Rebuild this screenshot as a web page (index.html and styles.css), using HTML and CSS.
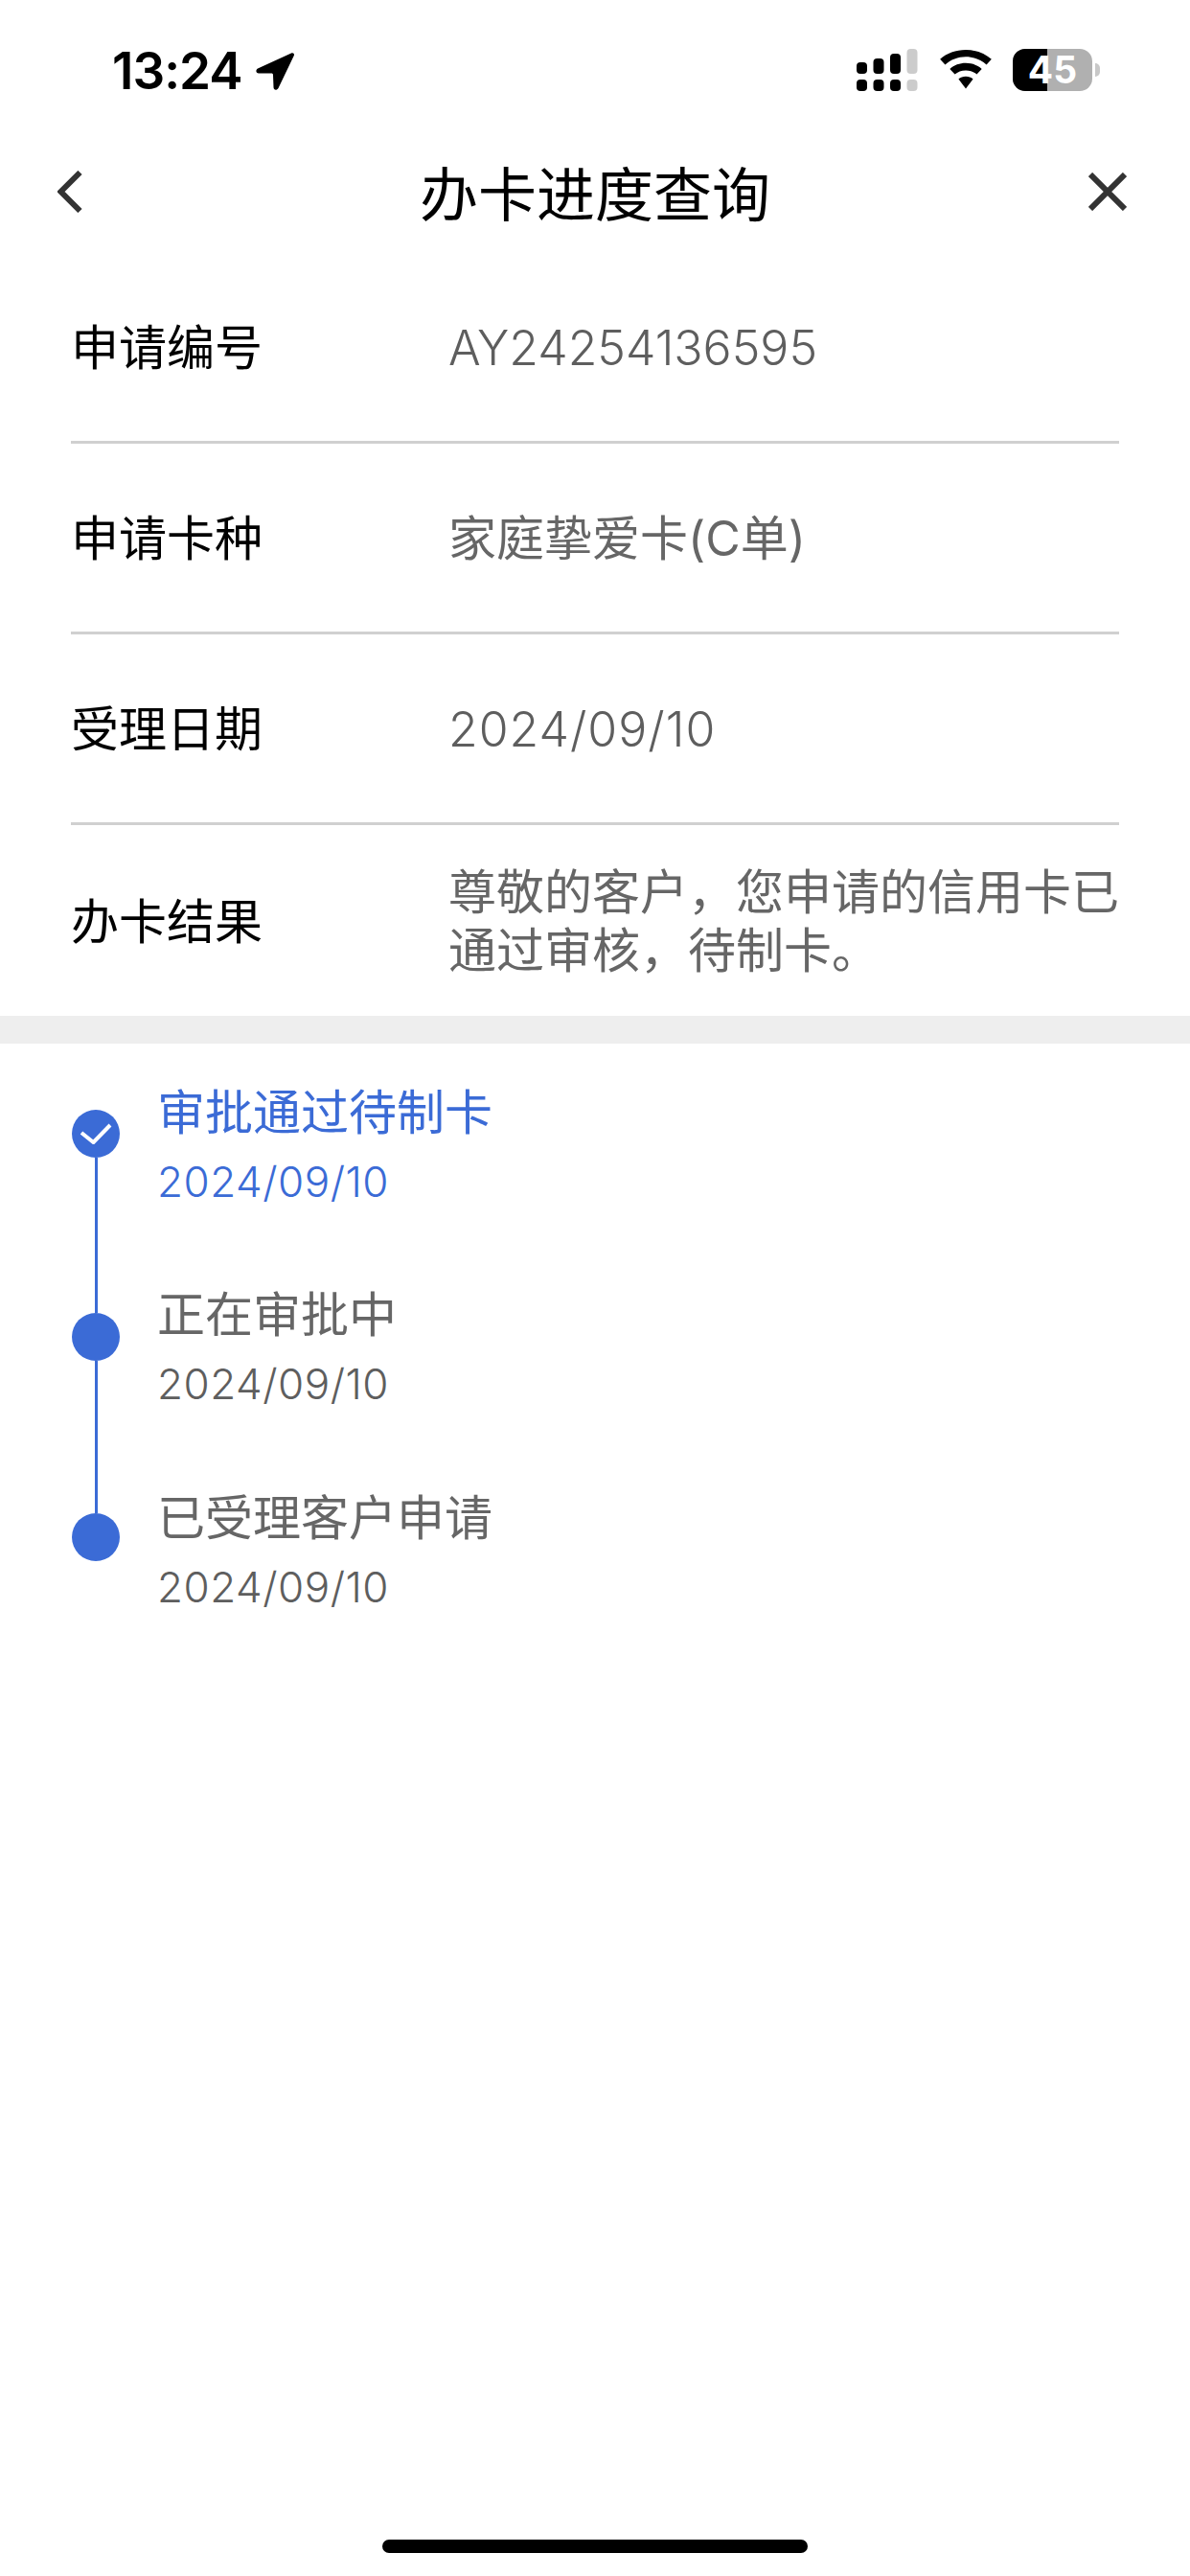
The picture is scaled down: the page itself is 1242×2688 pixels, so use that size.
FILE: index.html
```html
<!DOCTYPE html>
<html lang="zh-CN">
<head>
<meta charset="utf-8">
<title>办卡进度查询</title>
<link rel="stylesheet" href="styles.css">
</head>
<body>
<div class="page">
  <div class="status">
    <div class="status-left">
      <span class="time">13:24</span>
      <svg class="loc" viewBox="0 0 40 39"><path d="M37 .5 2 16.500C-.5 18 0 21.500 3 21.500h13c1.500 0 2 .5 2 2l.5 12.500c.1 3.500 3.500 3.500 5 1L39.800 3c.7-2-.8-3.300-2.800-2.500z"/></svg>
    </div>
    <div class="status-right">
      <svg class="cell" viewBox="0 0 64 44">
        <rect x="0" y="14" width="11" height="12" rx="4"/><rect x="17.500" y="10" width="11" height="16" rx="4"/><rect x="35" y="5" width="11" height="21" rx="4"/><rect class="dim" x="52.500" y="0" width="11" height="26" rx="4"/>
        <rect x="0" y="32" width="11" height="12" rx="4"/><rect x="17.500" y="32" width="11" height="12" rx="4"/><rect x="35" y="32" width="11" height="12" rx="4"/><rect class="dim" x="52.500" y="32" width="11" height="12" rx="4"/>
      </svg>
      <svg class="wifi" viewBox="0 0 48 40" preserveAspectRatio="none"><path d="M24 0C15 0 7 3.500 1 9.500l4.500 5.500C10.500 10 17 7 24 7s13.500 3 18.500 8L47 9.500C41 3.500 33 0 24 0z"/><path d="M24 13.500c-5.500 0-10.500 2.200-14.300 5.900l4.500 5.500c2.500-2.500 6-4 9.800-4s7.300 1.500 9.800 4l4.500-5.500c-3.800-3.700-8.800-5.900-14.300-5.900z"/><path d="M24 27c-2.500 0-4.800 1-6.500 2.700L24 39.500l6.500-9.800C28.800 28 26.500 27 24 27z"/></svg>
      <div class="battery">
        <div class="batt-body"><div class="batt-fill"></div><span class="batt-num">45</span></div>
        <div class="batt-cap"></div>
      </div>
    </div>
  </div>

  <header class="nav">
    <svg class="back" viewBox="0 0 26 44"><path d="M23.500 2 3.500 22 23.500 42"/></svg>
    <h1 class="title">办卡进度查询</h1>
    <svg class="close" viewBox="0 0 40 40"><path d="M2 2l36 36M38 2 2 38"/></svg>
  </header>

  <section class="info">
    <div class="row"><div class="label">申请编号</div><div class="value value-num">AY24254136595</div></div>
    <div class="row"><div class="label">申请卡种</div><div class="value">家庭挚爱卡(C单)</div></div>
    <div class="row"><div class="label">受理日期</div><div class="value value-num value-date">2024/09/10</div></div>
    <div class="row"><div class="label">办卡结果</div><div class="value">尊敬的客户，您申请的信用卡已通过审核，待制卡。</div></div>
  </section>

  <div class="band"></div>

  <section class="timeline">
    <div class="step step-first">
      <div class="rail">
        <div class="dot"><svg class="tick" viewBox="0 0 34 22"><path d="M2 10l12.500 10L32 2"/></svg></div>
        <div class="line"></div>
      </div>
      <div class="step-text"><div class="step-title">审批通过待制卡</div><div class="step-date">2024/09/10</div></div>
    </div>
    <div class="step step-second">
      <div class="rail">
        <div class="dot"></div>
        <div class="line"></div>
      </div>
      <div class="step-text"><div class="step-title">正在审批中</div><div class="step-date">2024/09/10</div></div>
    </div>
    <div class="step step-third">
      <div class="rail">
        <div class="dot"></div>
      </div>
      <div class="step-text"><div class="step-title">已受理客户申请</div><div class="step-date">2024/09/10</div></div>
    </div>
  </section>

  <div class="home-wrap"><div class="home"></div></div>
</div>
</body>
</html>
```
FILE: styles.css
```css
* { box-sizing: border-box; }
html, body { margin: 0; padding: 0; background: #fff; }
body { font-family: Inter, "Noto Sans CJK SC", sans-serif; }
.page { width: 1242px; height: 2688px; display: flex; flex-direction: column; overflow: hidden; }

.status { height: 165px; padding: 51px 94px 0 117px; display: flex; justify-content: space-between; align-items: flex-start; }
.status-left { display: flex; align-items: center; gap: 14px; height: 46px; }
.time { font-family: Inter, "Liberation Sans", sans-serif; font-size: 53px; font-weight: 600; color: #000; line-height: 46px; letter-spacing: -1px; }
.loc { width: 40px; height: 39px; fill: #000; }
.status-right { display: flex; align-items: flex-start; }
.cell { width: 64px; height: 44px; fill: #000; margin-right: 22px; }
.cell .dim { fill: #ccc; }
.wifi { width: 56px; height: 41px; fill: #000; margin: 1px 21px 0 0; }
.battery { display: flex; align-items: center; }
.batt-body { position: relative; width: 83px; height: 44px; background: #b0b0b0; border-radius: 13px; }
.batt-fill { width: 36px; height: 44px; background: #000; border-radius: 13px 0 0 13px; }
.batt-num { position: absolute; left: 0; right: 0; top: 0; text-align: center; color: #fff; font-family: Inter, "Liberation Sans", sans-serif; font-weight: 700; font-size: 39px; line-height: 44px; }
.batt-cap { width: 5px; height: 14px; background: #c8c8c8; border-radius: 0 7px 7px 0; margin-left: 3px; }

.nav { height: 70px; padding: 0 66px 0 60px; display: grid; grid-template-columns: 1fr auto 1fr; align-items: center; }
.back { width: 26px; height: 44px; fill: none; stroke: #333; stroke-width: 6; }
.close { width: 40px; height: 40px; fill: none; stroke: #333; stroke-width: 6; justify-self: end; }
.title { margin: 0 0 0 6px; font-family: "Noto Sans CJK SC", sans-serif; font-weight: 400; font-size: 61px; line-height: 70px; color: #000; }

.info { margin-top: 29px; padding: 0 74px; }
.row { display: flex; align-items: center; height: 199px; border-bottom: 3px solid #d0d0d0; }
.row:last-child { border-bottom: 0; }
.label { width: 394px; flex: none; font-family: "Noto Sans CJK SC", sans-serif; font-size: 50px; line-height: 60px; color: #000; margin-bottom: 6px; }
.value { flex: 1; font-size: 50px; font-weight: 400; line-height: 61px; color: #666; margin-top: 3px; }
.value-num { font-weight: 300; color: #5e5e5e; }
.value-date { letter-spacing: 1px; }

.band { height: 29px; background: #eee; }

.timeline { padding: 69px 0 0 75px; }
.step { display: flex; }
.step-first { height: 212px; }
.step-second { height: 209px; }
.rail { width: 50px; margin-right: 39px; display: flex; flex-direction: column; align-items: center; }
.dot { width: 50px; height: 50px; border-radius: 50%; background: #3b6bd6; display: flex; align-items: center; justify-content: center; flex: none; }
.tick { width: 34px; height: 22px; fill: none; stroke: #fff; stroke-width: 4; }
.line { width: 3px; flex: 1; background: #3b6bd6; }
.step-text { margin-top: -31px; }
.step-second .step-text { margin-top: -32px; }
.step-third .step-text { margin-top: -29px; }
.step-title { font-family: "Noto Sans CJK SC", sans-serif; font-size: 50px; line-height: 60px; color: #666; }
.step-date { font-size: 44px; font-weight: 300; line-height: 50px; margin-top: 21px; color: #5e5e5e; letter-spacing: .5px; }
.step-first .step-title, .step-first .step-date { color: #3b6bd6; }

.home-wrap { margin-top: auto; padding-bottom: 24px; display: flex; justify-content: center; }
.home { width: 444px; height: 14px; border-radius: 7px; background: #000; }
```
